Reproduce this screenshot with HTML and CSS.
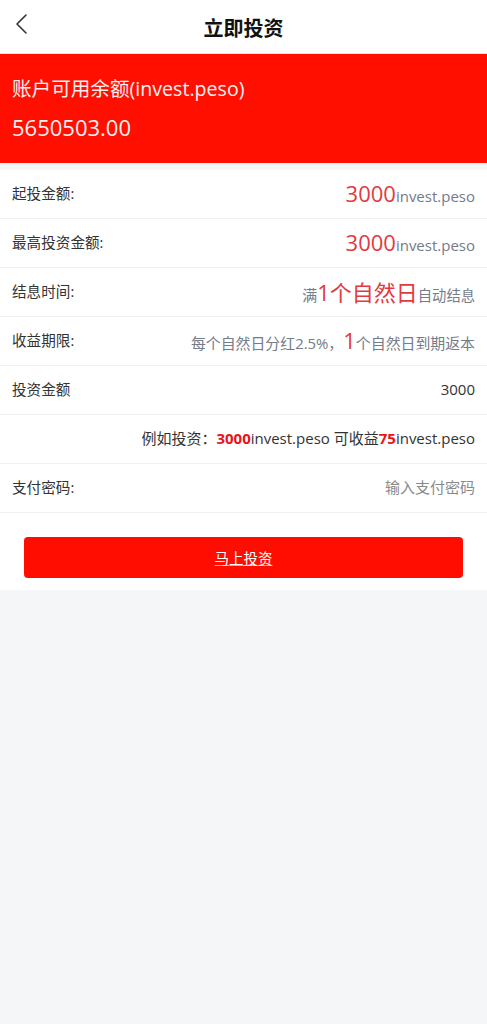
FILE: index.html
```html
<!DOCTYPE html>
<html lang="zh">
<head>
<meta charset="utf-8">
<link rel="stylesheet" href="styles.css">
</head>
<body>
<div class="page">
  <header class="topbar">
    <svg class="back" width="14" height="22" viewBox="0 0 14 22"><path d="M12 2 L3 11 L12 20" fill="none" stroke="#333" stroke-width="1.6" stroke-linecap="round" stroke-linejoin="round"/></svg>
    <h1 class="title">立即投资</h1>
  </header>
  <section class="banner">
    <div class="banner-label">账户可用余额(invest.peso)</div>
    <div class="banner-amount">5650503.00</div>
  </section>
  <section class="list">
    <div class="row">
      <span class="label">起投金额:</span>
      <span class="value"><em class="big">3000</em><span class="unit">invest.peso</span></span>
    </div>
    <div class="row">
      <span class="label">最高投资金额:</span>
      <span class="value"><em class="big">3000</em><span class="unit">invest.peso</span></span>
    </div>
    <div class="row">
      <span class="label">结息时间:</span>
      <span class="value"><span class="unit">满</span><em class="big">1个自然日</em><span class="unit sm">自动结息</span></span>
    </div>
    <div class="row">
      <span class="label">收益期限:</span>
      <span class="value"><span class="unit md">每个自然日分红2.5%，</span><em class="big">1</em><span class="unit md">个自然日到期返本</span></span>
    </div>
    <div class="row">
      <span class="label">投资金额</span>
      <span class="value dark">3000</span>
    </div>
    <div class="row">
      <span class="label"></span>
      <span class="value dark">例如投资：<b class="hl">3000</b>invest.peso 可收益<b class="hl">75</b>invest.peso</span>
    </div>
    <div class="row">
      <span class="label">支付密码:</span>
      <span class="value placeholder">输入支付密码</span>
    </div>
    <div class="btn-wrap">
      <button class="btn">马上投资</button>
    </div>
  </section>
</div>
</body>
</html>
```

FILE: styles.css
```css
* { box-sizing: border-box; }
html, body { margin: 0; padding: 0; }
body {
  background: #f5f6f8;
  font-family: "Open Sans", "Noto Sans CJK SC", sans-serif;
  color: #333;
  height: 1024px;
}
.page { width: 487px; }
.topbar {
  height: 54px;
  background: #fff;
  border-bottom: 1px solid #e4e4e4;
  display: flex;
  align-items: center;
  justify-content: center;
  position: relative;
}
.back { position: absolute; left: 14px; top: 13px; }
.title {
  margin: 0;
  font-size: 20px;
  font-weight: 700;
  color: #111;
  margin-top: 2px;
}
.banner {
  background: #ff0f00;
  height: 109px;
  padding: 21px 12px 0;
  color: #fff;
}
.banner-label { font-size: 19.6px; line-height: 28px; color: #fdf0f0; }
.banner-amount { font-size: 22px; line-height: 30px; margin-top: 9px; color: #fdf0f0; }
.list {
  margin-top: 7px;
  background: #fff;
}
.row {
  height: 49px;
  border-bottom: 1px solid #f0f0f2;
  display: flex;
  align-items: center;
  justify-content: space-between;
  padding: 0 12px 3px;
}
.label { font-size: 14.6px; color: #333; }
.value { display: flex; align-items: baseline; font-size: 15px; color: #747b8a; }
.value em { font-style: normal; }
.big { font-size: 22px; color: #e23a3e; }
.unit { font-size: 15px; color: #747b8a; }
.unit.sm { font-size: 14.3px; }
.unit.md { font-size: 14.9px; }
.dark { color: #333; }
.hl { color: #e8141b; font-weight: 700; }
.placeholder { color: #8a8a8a; }
.btn-wrap { padding: 24px 24px 12px; }
.btn {
  display: block;
  width: 100%;
  height: 41px;
  border: none;
  border-radius: 4px;
  background: #ff0d00;
  color: #fff;
  font-family: inherit;
  font-size: 14.5px;
  text-decoration: underline;
  text-decoration-color: rgba(255,255,255,0.6);
}
```
